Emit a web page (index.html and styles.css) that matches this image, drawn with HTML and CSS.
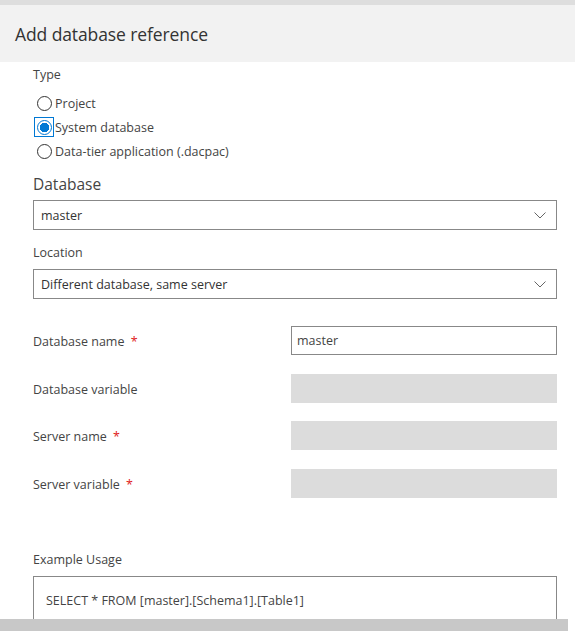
FILE: index.html
```html
<!DOCTYPE html>
<html lang="en">
<head>
    <meta charset="UTF-8">
    <title>Add database reference</title>
    <link rel="stylesheet" href="styles.css">
</head>
<body>
    <div class="topbar"></div>
    <header class="header">
        <h1>Add database reference</h1>
    </header>

    <main class="content">
        <div class="label type">Type</div>
        <div class="radio-group">
            <label class="radio"><span class="radio-dot"></span>Project</label>
            <label class="radio checked"><span class="radio-dot"></span>System database</label>
            <label class="radio"><span class="radio-dot"></span>Data-tier application (.dacpac)</label>
        </div>

        <div class="label big">Database</div>
        <div class="dropdown">
            <span>master</span>
            <svg class="chevron" width="12" height="7" viewBox="0 0 12 7"><path d="M0.5 0.5 L6 6 L11.5 0.5" fill="none" stroke="#666" stroke-width="1"/></svg>
        </div>

        <div class="label location">Location</div>
        <div class="dropdown">
            <span>Different database, same server</span>
            <svg class="chevron" width="12" height="7" viewBox="0 0 12 7"><path d="M0.5 0.5 L6 6 L11.5 0.5" fill="none" stroke="#666" stroke-width="1"/></svg>
        </div>

        <div class="fields">
            <div class="field-label">Database name <span class="req">*</span></div>
            <div class="input">master</div>

            <div class="field-label">Database variable</div>
            <div class="input disabled"></div>

            <div class="field-label">Server name <span class="req">*</span></div>
            <div class="input disabled"></div>

            <div class="field-label">Server variable <span class="req">*</span></div>
            <div class="input disabled"></div>
        </div>

        <div class="label usage">Example Usage</div>
        <div class="usage-box">SELECT * FROM [master].[Schema1].[Table1]</div>
    </main>

    <div class="scrollbar"></div>
</body>
</html>
```

FILE: styles.css
```css
* {
    margin: 0;
    padding: 0;
    box-sizing: border-box;
}

body {
    font-family: "Open Sans", "Noto Sans", sans-serif;
    font-size: 12.5px;
    color: #323130;
    background: #fff;
    overflow: hidden;
}

.topbar {
    height: 5px;
    background: #dedede;
}

/* Dialog header */
.header {
    height: 57px;
    background: #f2f2f2;
    display: flex;
    align-items: center;
    padding-left: 15px;
}

.header h1 {
    font-size: 17.5px;
    font-weight: 500;
    color: #333;
    letter-spacing: -0.1px;
}

.content {
    padding: 2px 18px 0 33px;
}

.label {
    line-height: 20px;
    color: #444;
}

.label.type {
    padding-top: 1px;
}

.label.big {
    font-size: 15.5px;
    line-height: 22px;
    margin-top: 10px;
    margin-bottom: 5px;
}

.label.location {
    margin-top: 13px;
    margin-bottom: 6px;
}

/* Radios */
.radio-group {
    margin-top: 6px;
    margin-left: 1px;
}

.radio {
    display: flex;
    align-items: center;
    height: 24px;
    color: #444;
}

.radio-dot {
    width: 20px;
    height: 20px;
    margin-right: 1px;
    display: flex;
    align-items: center;
    justify-content: center;
    border: 1px solid transparent;
}

.radio-dot::before {
    content: '';
    width: 15px;
    height: 15px;
    border: 1px solid #333;
    border-radius: 50%;
    box-sizing: border-box;
}

.radio.checked .radio-dot {
    border-color: #0078d4;
}

.radio.checked .radio-dot::before {
    border-color: #0078d4;
    background: radial-gradient(circle, #0078d4 0 4.5px, #fff 5px);
}

/* Dropdowns */
.dropdown {
    height: 30px;
    border: 1px solid #888;
    display: flex;
    align-items: center;
    justify-content: space-between;
    padding: 1px 10px 0 7px;
    color: #333;
}

.chevron {
    display: block;
}

/* Name / variable fields */
.fields {
    display: grid;
    grid-template-columns: 258px 1fr;
    row-gap: 18.6px;
    margin-top: 27px;
    align-items: center;
}

.field-label {
    color: #444;
    padding-top: 2px;
}

.req {
    color: #e02020;
    margin-left: 3px;
}

.input {
    height: 29px;
    border: 1px solid #888;
    padding: 0 5px;
    line-height: 28px;
    color: #444;
}

.input.disabled {
    border-color: #dcdcdc;
    background: #dcdcdc;
}

.label.usage {
    margin-top: 52px;
    margin-bottom: 6px;
}

.usage-box {
    height: 70px;
    border: 1px solid #888;
    padding: 14px 12px;
    line-height: 20px;
    color: #444;
}

/* Horizontal scrollbar track */
.scrollbar {
    position: fixed;
    left: 0;
    bottom: 0;
    width: 568px;
    height: 12px;
    background: #c8c8c8;
}
```
